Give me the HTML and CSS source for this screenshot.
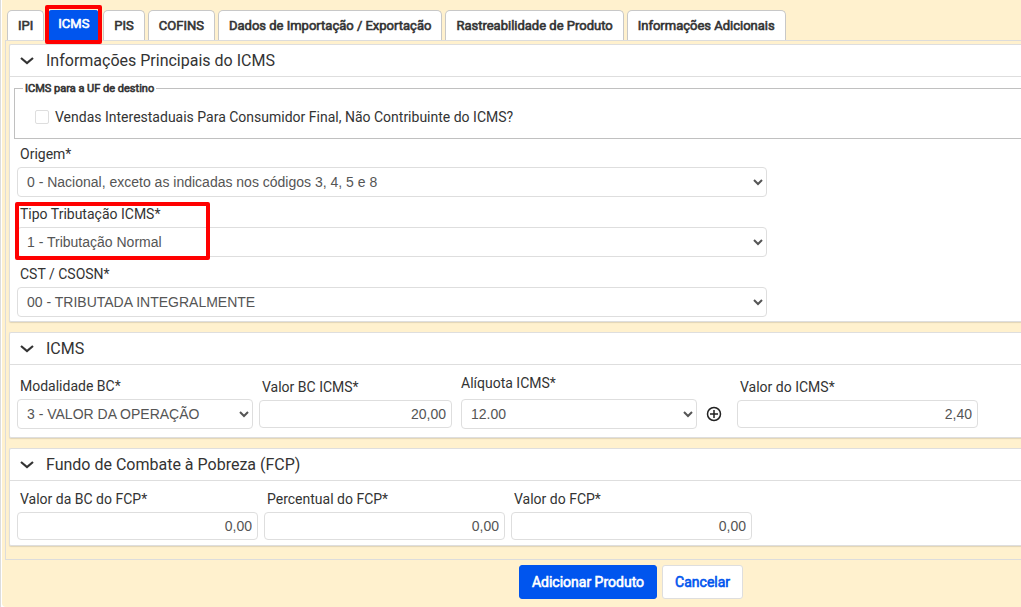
FILE: index.html
```html
<!DOCTYPE html>
<html lang="pt-BR">
<head>
  <meta charset="UTF-8" />
  <meta name="viewport" content="width=device-width, initial-scale=1" />
  <title>ICMS - Produto</title>
  <link rel="stylesheet" href="styles.css">
</head>
<body>
  <form class="modal">
    <nav class="tabs">
      <button type="button" class="tab">IPI</button>
      <button type="button" class="tab active">ICMS<span class="marca marca-tab"></span></button>
      <button type="button" class="tab">PIS</button>
      <button type="button" class="tab">COFINS</button>
      <button type="button" class="tab">Dados de Importação / Exportação</button>
      <button type="button" class="tab">Rastreabilidade de Produto</button>
      <button type="button" class="tab">Informações Adicionais</button>
    </nav>

    <div class="content">
      <section class="panel">
        <h2><svg class="seta" viewBox="0 0 14 8"><path d="M1 1l6 5 6-5" /></svg>Informações Principais do ICMS</h2>
        <fieldset>
          <legend>ICMS para a UF de destino</legend>
          <input type="checkbox" id="vendas" />
          <label for="vendas">Vendas Interestaduais Para Consumidor Final, Não Contribuinte do ICMS?</label>
        </fieldset>
        <div class="lista">
          <div class="campo">
            <label for="origem">Origem*</label>
            <select id="origem">
              <option>0 - Nacional, exceto as indicadas nos códigos 3, 4, 5 e 8</option>
            </select>
          </div>
          <div class="campo">
            <label for="tipo">Tipo Tributação ICMS*</label>
            <select id="tipo">
              <option>1 - Tributação Normal</option>
            </select>
            <span class="marca marca-campo"></span>
          </div>
          <div class="campo">
            <label for="cst">CST / CSOSN*</label>
            <select id="cst">
              <option>00 - TRIBUTADA INTEGRALMENTE</option>
            </select>
          </div>
        </div>
      </section>

      <section class="panel">
        <h2><svg class="seta" viewBox="0 0 14 8"><path d="M1 1l6 5 6-5" /></svg>ICMS</h2>
        <div class="linha linha-icms">
          <div class="campo modalidade">
            <label for="modalidade">Modalidade BC*</label>
            <select id="modalidade">
              <option>3 - VALOR DA OPERAÇÃO</option>
            </select>
          </div>
          <div class="campo base">
            <label for="valorbc">Valor BC ICMS*</label>
            <input type="text" id="valorbc" value="20,00" />
          </div>
          <div class="campo aliquota">
            <label for="aliquota">Alíquota ICMS*</label>
            <div class="grupo">
              <select id="aliquota">
                <option>12.00</option>
              </select>
              <button type="button" class="mais" aria-label="Adicionar alíquota">
                <svg viewBox="0 0 16 16"><circle cx="8" cy="8" r="6.5" /><path d="M8 4v8M4 8h8" /></svg>
              </button>
            </div>
          </div>
          <div class="campo valor">
            <label for="valoricms">Valor do ICMS*</label>
            <input type="text" id="valoricms" value="2,40" />
          </div>
        </div>
      </section>

      <section class="panel">
        <h2><svg class="seta" viewBox="0 0 14 8"><path d="M1 1l6 5 6-5" /></svg>Fundo de Combate à Pobreza (FCP)</h2>
        <div class="linha">
          <div class="campo valor">
            <label for="bcfcp">Valor da BC do FCP*</label>
            <input type="text" id="bcfcp" value="0,00" />
          </div>
          <div class="campo valor">
            <label for="percfcp">Percentual do FCP*</label>
            <input type="text" id="percfcp" value="0,00" />
          </div>
          <div class="campo valor">
            <label for="valorfcp">Valor do FCP*</label>
            <input type="text" id="valorfcp" value="0,00" />
          </div>
        </div>
      </section>
    </div>

    <div class="acoes">
      <button type="button" class="btn primario">Adicionar Produto</button>
      <button type="button" class="btn">Cancelar</button>
    </div>
  </form>
</body>
</html>
```
FILE: styles.css
```css
* {
  box-sizing: border-box;
}
body {
  margin: 0;
  padding-left: 1px;
  border-left: 1px solid #dcdcdc;
  background: #fff;
  color: #333;
  font-family: Roboto, sans-serif;
  font-size: 14px;
  overflow-x: hidden;
}
button {
  font-family: inherit;
  cursor: pointer;
}
.modal {
  background: #fff1ce;
  padding: 10px 0 8px 3px;
  border-radius: 0 0 0 4px;
}

/* abas */
.tabs {
  display: flex;
  gap: 3px;
  padding-left: 2px;
}
.tab {
  position: relative;
  height: 30px;
  padding: 0 10px;
  background: #fff;
  color: #333;
  border: 1px solid #c8c8c8;
  border-bottom: none;
  border-radius: 5px 5px 0 0;
  font-size: 13px;
  font-weight: 400;
  -webkit-text-stroke: 0.6px;
  white-space: nowrap;
}
.tab.active {
  background: #0055ee;
  border-color: #0055ee;
  color: #fff;
  padding-bottom: 4px;
}
.marca {
  position: absolute;
  border: 4px solid #f00;
  border-radius: 2px;
  pointer-events: none;
}
.marca-tab {
  inset: -6px -3px -4px -3px;
}
.marca-campo {
  left: -2px;
  top: -1px;
  width: 195px;
  height: 58px;
}

/* paineis */
.content {
  border: 1px solid #dcdcdc;
  border-right: none;
  padding: 3px 0 13px 3px;
}
.panel {
  background: #fff;
  border: 1px solid #dedede;
  border-right: none;
  border-radius: 2px 0 0 2px;
  box-shadow: 0 1px 1px rgba(0,0,0,0.12);
}
.panel + .panel {
  margin-top: 10px;
}
h2 {
  display: flex;
  align-items: center;
  gap: 12px;
  height: 32px;
  margin: 0;
  padding-left: 10px;
  border-bottom: 1px solid #dedede;
  font-size: 16px;
  font-weight: 400;
}
.seta {
  width: 14px;
  height: 8px;
  fill: none;
  stroke: #333;
  stroke-width: 2.2;
}
fieldset {
  display: flex;
  align-items: center;
  height: 57px;
  margin: 5px 0 0 4px;
  padding: 0 0 0 20px;
  border: 1px solid #c0c0c0;
  border-right: none;
}
legend {
  margin-left: -12px;
  padding: 0 2px;
  font-size: 11px;
  font-weight: 400;
  -webkit-text-stroke: 0.6px;
}
input[type="checkbox"] {
  appearance: none;
  width: 14px;
  height: 14px;
  margin: 0 6px 0 0;
  border: 1px solid #dedede;
  border-radius: 2px;
}

/* campos */
.lista {
  max-width: 757px;
  padding: 4px 0 4px 7px;
}
.campo {
  position: relative;
}
.lista .campo + .campo {
  margin-top: 6px;
}
.campo label {
  display: block;
  height: 24px;
  padding-left: 3px;
  line-height: 22px;
}
.campo select, .campo input {
  display: block;
  width: 100%;
  height: 30px;
  background: #fff;
  color: #555;
  border: 1px solid #dedede;
  border-radius: 4px;
  font-family: "Liberation Sans", Arial, sans-serif;
  font-size: 14px;
}
.campo select {
  padding: 0 0 0 5px;
}
.campo input {
  height: 28px;
  padding: 0 5px;
  text-align: right;
}
.linha {
  display: flex;
  align-items: flex-end;
  gap: 6px;
  padding: 7px 7px 5px;
}
.linha-icms {
  padding: 7px 7px 8px;
}
.linha-icms input {
  margin-bottom: 1px;
}
.modalidade {
  flex: 0 1 236px;
}
.base {
  flex: 0 1 193px;
}
.aliquota {
  flex: 0 1 261px;
  margin: 0 9px 0 3px;
}
.aliquota label {
  height: 27px;
  padding-left: 0;
}
.valor {
  flex: 0 1 241px;
}
.grupo {
  display: flex;
  align-items: center;
  gap: 9px;
}
.mais {
  flex: none;
  width: 16px;
  height: 16px;
  padding: 0;
  border: none;
  background: none;
}
.mais svg {
  display: block;
  fill: none;
  stroke: #222;
  stroke-width: 1.5;
}

/* botoes */
.acoes {
  display: flex;
  justify-content: center;
  gap: 5px;
  padding: 5px 0 0 236px;
}
.btn {
  height: 34px;
  padding: 0 12px;
  background: #fff;
  color: #0055ee;
  border: 1px solid #dedede;
  border-radius: 3px;
  font-size: 14px;
  font-weight: 400;
  -webkit-text-stroke: 0.6px;
}
.btn.primario {
  background: #0055ee;
  color: #fff;
  border-color: #0055ee;
}
```
